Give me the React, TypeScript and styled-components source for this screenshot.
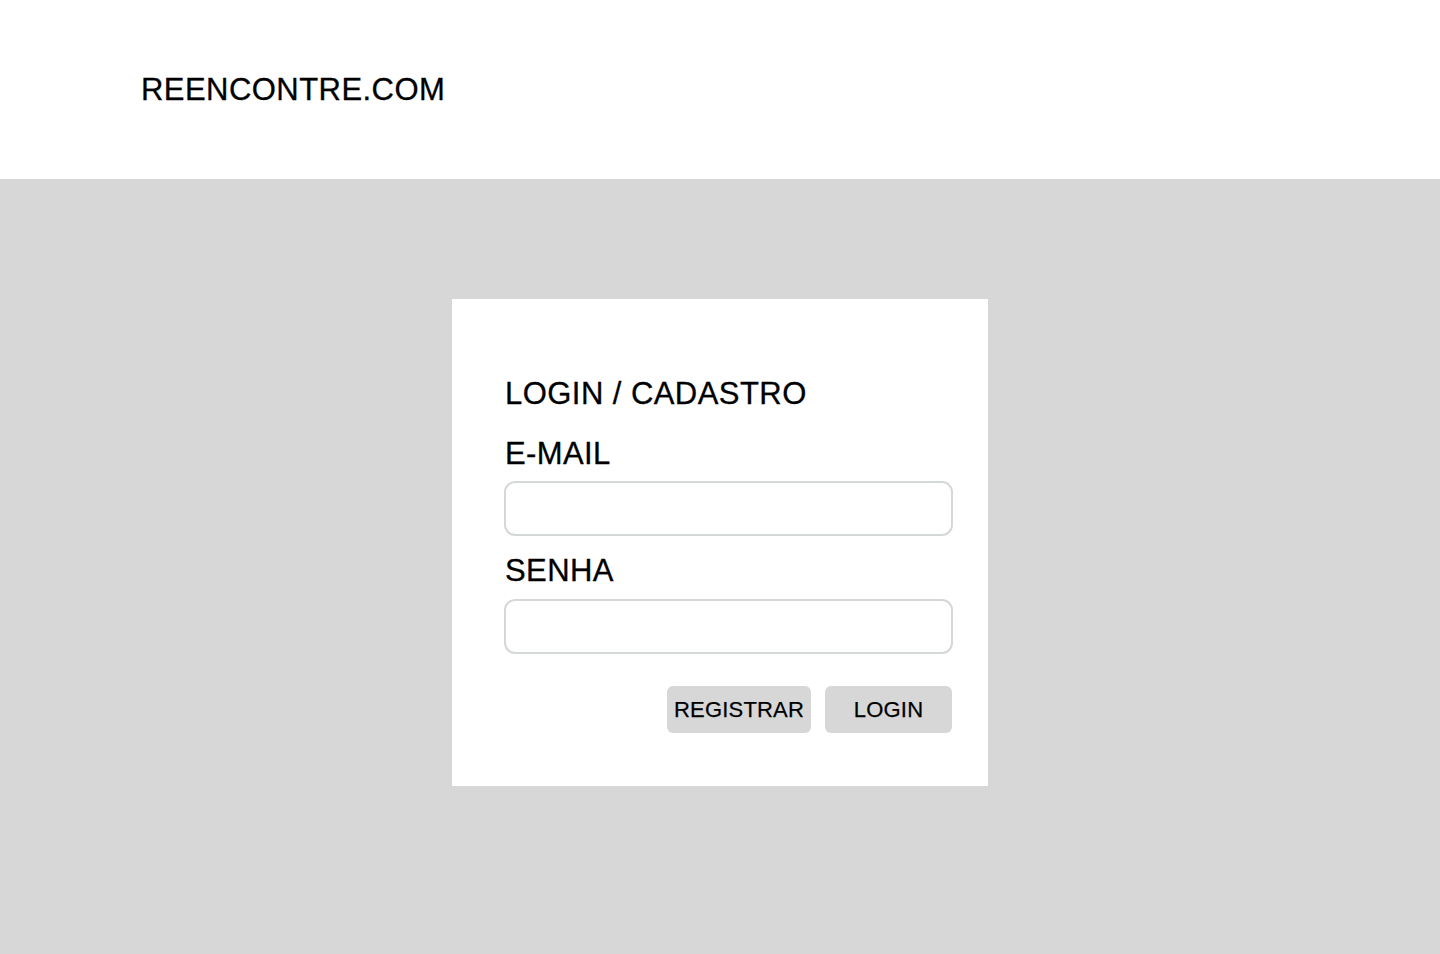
import React from "react";
import styled, { createGlobalStyle } from "styled-components";

const Global = createGlobalStyle`
  html, body { margin: 0; padding: 0; }
  body {
    font-family: "Liberation Sans", Arial, Helvetica, sans-serif;
    background: #d7d7d7;
    color: #000;
  }
  * { box-sizing: border-box; }
`;

const Page = styled.div`
  min-height: 954px;
  display: flex;
  flex-direction: column;
`;

const Header = styled.header`
  height: 179px;
  background: #ffffff;
  padding: 72px 0 0 141px;
`;

const Logo = styled.div`
  font-size: 31px;
  line-height: 36px;
  letter-spacing: 0.45px;
  -webkit-text-stroke: 0.3px #000;
`;

const Main = styled.main`
  flex: 1;
  background: #d7d7d7;
  display: flex;
  justify-content: center;
  padding-top: 120px;
`;

const Card = styled.form`
  width: 536px;
  height: 487px;
  background: #ffffff;
  padding: 77px 35px 0 52px;
  display: flex;
  flex-direction: column;
`;

const Title = styled.h1`
  margin: 0 0 24px 1px;
  font-size: 31px;
  line-height: 36px;
  font-weight: 400;
  letter-spacing: 0.45px;
  -webkit-text-stroke: 0.3px #000;
`;

const Label = styled.label<{ $gap?: number; $below?: number }>`
  display: block;
  margin: ${(p) => p.$gap ?? 0}px 0 ${(p) => p.$below ?? 10}px 1px;
  font-size: 31px;
  line-height: 36px;
  letter-spacing: 0.4px;
  -webkit-text-stroke: 0.3px #000;
`;

const Input = styled.input`
  display: block;
  width: 449px;
  height: 55px;
  border: 2px solid #d5d8d8;
  border-radius: 11px;
  background: #fff;
  outline: none;
  font-size: 20px;
  padding: 0 14px;
  font-family: inherit;
`;

const Actions = styled.div`
  display: flex;
  justify-content: flex-end;
  gap: 14px;
  margin: 32px 1px 0 0;
`;

const Button = styled.button<{ $w: number }>`
  width: ${(p) => p.$w}px;
  height: 47px;
  border: none;
  border-radius: 6px;
  background: #d7d7d7;
  color: #000;
  font-family: "Liberation Sans", Arial, Helvetica, sans-serif;
  font-size: 22px;
  letter-spacing: 0.2px;
  -webkit-text-stroke: 0.25px #000;
  padding: 0;
  cursor: pointer;
`;

export default function App() {
  return (
    <>
      <Global />
      <Page>
        <Header>
          <Logo>REENCONTRE.COM</Logo>
        </Header>
        <Main>
          <Card onSubmit={(e) => e.preventDefault()}>
            <Title>LOGIN / CADASTRO</Title>
            <Label htmlFor="email" $below={9}>E-MAIL</Label>
            <Input id="email" type="email" />
            <Label htmlFor="senha" $gap={17}>SENHA</Label>
            <Input id="senha" type="password" />
            <Actions>
              <Button type="button" $w={144}>REGISTRAR</Button>
              <Button type="submit" $w={127}>LOGIN</Button>
            </Actions>
          </Card>
        </Main>
      </Page>
    </>
  );
}
